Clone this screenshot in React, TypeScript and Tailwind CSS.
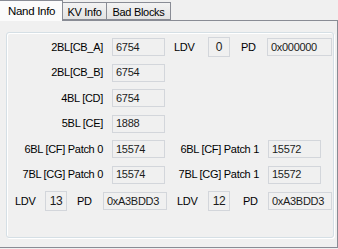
const field = 'h-[18px] border border-[#d3d6db] bg-[#f0f0f0] pl-[3px] flex items-center text-[#1c1c1c]';
const ldvBox = 'h-[20px] w-[22px] border border-[#d3d6db] bg-[#f0f0f0] flex items-center justify-center text-[12px] text-[#1c1c1c]';

function Labeled({ label, value }: { label: string; value: string }) {
  return (
    <>
      <div className="w-[96px] text-right">{label}</div>
      <div className={`${field} ml-[9px] w-[53px]`}>{value}</div>
    </>
  );
}

export default function App() {
  return (
    <div
      className="w-[338px] h-[249px] bg-[#f0f0f0] text-[11px] tracking-[-0.3px] text-black overflow-hidden"
      style={{ fontFamily: '"Liberation Sans", Arial, sans-serif' }}
    >
      {/* tab strip */}
      <div className="flex items-end h-[21px] relative z-10">
        <div className="h-[21px] w-[63px] border-t border-r border-[#898c95] bg-[#fbfbfb] pl-[8px] pt-[2px] text-[11.5px]">
          Nand Info
        </div>
        <div className="h-[18px] w-[44px] border-t border-r border-b border-[#898c95] bg-gradient-to-b from-[#f3f3f3] to-[#e3e3e3] flex items-start justify-center pt-[1px] mb-px">
          KV Info
        </div>
        <div className="h-[18px] w-[64px] border-t border-r border-b border-[#898c95] bg-gradient-to-b from-[#f3f3f3] to-[#e3e3e3] flex items-start justify-center pt-[1px] mb-px">
          Bad Blocks
        </div>
      </div>

      {/* tab page */}
      <div className="-mt-px h-[228px] border-t border-r border-b border-[#898c95] pt-[11px]">
        <div className="ml-[6px] mr-[3px] h-[206px] rounded-[3px] border border-[#d5dfe5] shadow-[inset_1px_1px_0_#fff,1px_1px_0_#fff] pt-[4px] flex flex-col gap-[5.5px]">
          <div className="flex items-center h-[20px]">
            <Labeled label="2BL[CB_A]" value="6754" />
            <div className="ml-[9px] w-[34px]">LDV</div>
            <div className={ldvBox}>0</div>
            <div className="ml-[11px] w-[26px]">PD</div>
            <div className={`${field} w-[65px]`}>0x000000</div>
          </div>
          <div className="flex items-center h-[20px]">
            <Labeled label="2BL[CB_B]" value="6754" />
          </div>
          <div className="flex items-center h-[20px]">
            <Labeled label="4BL [CD]" value="6754" />
          </div>
          <div className="flex items-center h-[20px]">
            <Labeled label="5BL [CE]" value="1888" />
          </div>
          <div className="flex items-center h-[20px]">
            <Labeled label="6BL [CF] Patch 0" value="15574" />
            <div className="w-[94px] text-right">6BL [CF] Patch 1</div>
            <div className={`${field} ml-[9px] w-[53px]`}>15572</div>
          </div>
          <div className="flex items-center h-[20px]">
            <Labeled label="7BL [CG] Patch 0" value="15574" />
            <div className="w-[94px] text-right">7BL [CG] Patch 1</div>
            <div className={`${field} ml-[9px] w-[53px]`}>15572</div>
          </div>
          <div className="flex items-center h-[20px] mt-[1px]">
            <div className="ml-[8px] w-[30px]">LDV</div>
            <div className={ldvBox}>13</div>
            <div className="ml-[10px] w-[26px]">PD</div>
            <div className={`${field} w-[64px]`}>0xA3BDD3</div>
            <div className="ml-[10px] w-[31px]">LDV</div>
            <div className={ldvBox}>12</div>
            <div className="ml-[13px] w-[25px]">PD</div>
            <div className={`${field} w-[64px]`}>0xA3BDD3</div>
          </div>
        </div>
      </div>
    </div>
  );
}
